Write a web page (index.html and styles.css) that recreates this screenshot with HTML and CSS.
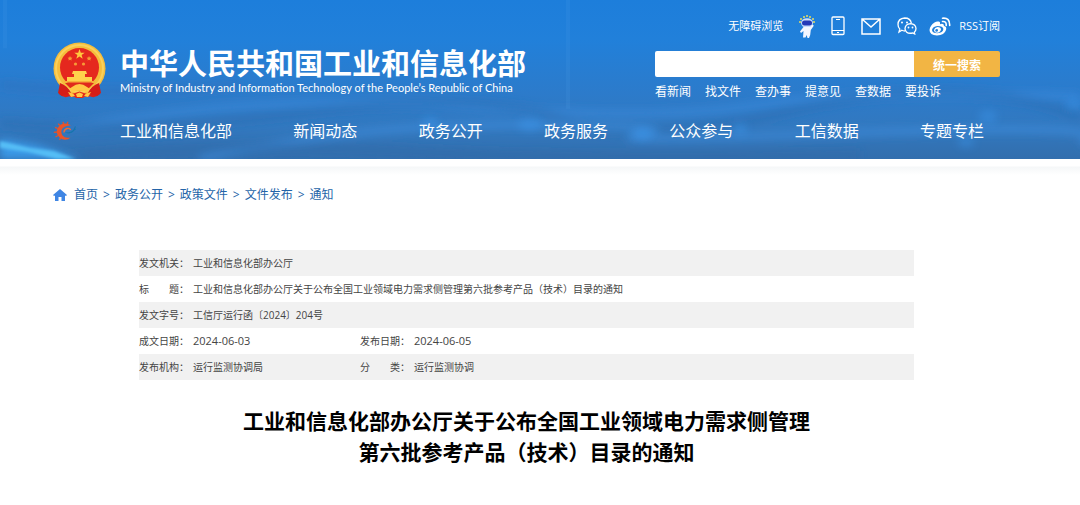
FILE: index.html
```html
<!DOCTYPE html>
<html lang="zh-CN">
<head>
<meta charset="utf-8">
<title>中华人民共和国工业和信息化部</title>
<link rel="stylesheet" href="styles.css">
</head>
<body>
<header class="header">
  <svg class="header-art" viewBox="0 0 1080 158" preserveAspectRatio="none" aria-hidden="true">
    <defs>
      <filter id="soft" x="-20%" y="-50%" width="140%" height="200%"><feGaussianBlur stdDeviation="4"/></filter>
      <filter id="slight" x="-20%" y="-50%" width="140%" height="200%"><feGaussianBlur stdDeviation="1.500"/></filter>
    </defs>
    <g fill="none" filter="url(#soft)">
      <path d="M0 84Q120 96 240 84" stroke="#2f6fb8" stroke-width="9" opacity=".4"/>
      <path d="M60 128Q260 92 460 106T760 104T1080 96" stroke="#3c90e2" stroke-width="6" opacity=".6"/>
      <path d="M0 122Q120 134 300 112T560 118T800 108T1080 116" stroke="#2c68a8" stroke-width="10" opacity=".35"/>
      <path d="M200 158Q360 122 530 124T640 134T860 132T1080 142" stroke="#3f93e4" stroke-width="6" opacity=".6"/>
      <path d="M60 158Q200 140 400 150T860 154" stroke="#2f66a4" stroke-width="9" opacity=".4"/>
    </g>
    <g fill="#3d9cf4" filter="url(#soft)" opacity=".4">
      <ellipse cx="530" cy="124" rx="12" ry="6"/><ellipse cx="642" cy="133" rx="9" ry="6"/><ellipse cx="740" cy="128" rx="7" ry="6"/><ellipse cx="988" cy="116" rx="9" ry="6"/><ellipse cx="966" cy="141" rx="8" ry="5"/><ellipse cx="1074" cy="104" rx="9" ry="5"/><ellipse cx="430" cy="122" rx="8" ry="6"/>
    </g>
    <path d="M0 138L36 144 82 158H0Z" fill="#3a9ae8" filter="url(#soft)"/>
    <path d="M0 140L30 147 54 150 76 158H56L28 151 0 147Z" fill="#55bef6" filter="url(#slight)"/>
    <path d="M5 0V48M568 0V108" stroke="#58a6ee" stroke-width="4" opacity=".12"/>
  </svg>
  <div class="header-body">
    <div class="masthead">
      <div class="brand">
        <svg class="emblem" viewBox="0 0 53 57" aria-hidden="true">
          <path d="M8 39L45 39 47 52Q42 57 36 54L26 56 17 54Q11 57 6 52Z" fill="#dc2018"/>
          <circle cx="26.500" cy="26.500" r="26" fill="#f5bd3c"/>
          <circle cx="26.500" cy="26.500" r="23.500" fill="none" stroke="#fbd05a" stroke-width="2"/>
          <circle cx="26.500" cy="25.500" r="19.500" fill="#e5281e"/>
          <path d="M26.500 7l1.300 3.700h3.900l-3.100 2.300 1.100 3.700-3.200-2.200-3.200 2.200 1.100-3.700-3.100-2.300h3.900Z" fill="#ffc83e"/>
          <g fill="#f79a36"><path d="M17 14l.8 1.500 1.700.2-1.200 1.200.3 1.700-1.600-.8-1.500.8.3-1.700-1.200-1.200 1.700-.2Z"/><path d="M36 14l.8 1.500 1.700.2-1.200 1.200.3 1.700-1.600-.8-1.500.8.3-1.700-1.200-1.200 1.700-.2Z"/><circle cx="22.500" cy="22" r="1.600"/><circle cx="30.500" cy="22" r="1.600"/></g>
          <path d="M20 29h13l1 3h-2v3h7v4H14v-4h7v-3h-2Z" fill="#ffd24c"/>
          <path d="M11 39h31v1.500H11Z" fill="#f5b13a"/>
          <path d="M7 41Q15 44 18 51L9 54 5 51ZM46 41Q38 44 35 51L44 54 48 51Z" fill="#d51d18"/>
          <path d="M12 41h29l-6 6H18Z" fill="#e02a1c"/>
          <path d="M19 45q7.500-6 15 0l3 2-4 3q-6.500-4-13 0l-4-3Z" fill="#ffc945"/>
          <path d="M14 50l5 2 7.500-2.500L34 52l5-2-3 5-4-1-2 2h-7l-2-2-4 1Z" fill="#e02a1c"/>
          <path d="M15 50l5 1.500 2 2.500-4 1ZM38 50l-5 1.500-2 2.500 4 1ZM23 52l3.500-1.500L30 52l-1 3h-5Z" fill="#ffc945"/>
        </svg>
        <div class="brand-text">
          <h1 class="brand-name">中华人民共和国工业和信息化部</h1>
          <p class="brand-english" lang="en">Ministry of Industry and Information Technology of the People’s Republic of China</p>
        </div>
      </div>
      <div class="tools">
        <div class="quick">
          <a class="quick-text" href="#">无障碍浏览</a>
          <a class="robot-link" href="#" aria-label="智能问答">
            <svg width="16" height="23" viewBox="0 0 16 23"><g fill="#e9dc62"><circle cx="2" cy="4" r="1"/><circle cx="5" cy="2" r="1"/><circle cx="8" cy="1" r="1"/><circle cx="11" cy="2" r="1"/><circle cx="14" cy="4" r="1"/><circle cx="1" cy="7" r="1"/><circle cx="15" cy="7" r="1"/></g><ellipse cx="8" cy="8" rx="6" ry="4.800" fill="#c9dcfa"/><rect x="3" y="5.500" width="10" height="5" rx="2.500" fill="#2439b8"/><path d="M4.500 12h6.500l2.500-2.500 1.300 1.200-3 4.300-.6 5-1.200 3H8.500l-.8-3-1.200 2.500H4l.5-6.500-2.500 2-1-1.500Z" fill="#f3f6ff"/></svg>
          </a>
          <a class="phone-link" href="#" aria-label="手机版">
            <svg width="14" height="20" viewBox="0 0 14 20" fill="none" stroke="#fff"><rect x="1" y="1" width="12" height="17.500" rx="1" stroke-width="1.300"/><path d="M5 3.500h4M1 14.500h12M6 16.500h2"/></svg>
          </a>
          <a class="mail-link" href="#" aria-label="邮箱">
            <svg width="20" height="17" viewBox="0 0 20 17" fill="none" stroke="#fff" stroke-width="1.500"><path d="M1 1h18v15H1ZM1 1l9 8 9-8"/></svg>
          </a>
          <a class="wechat-link" href="#" aria-label="微信">
            <svg width="20" height="18" viewBox="0 0 20 18"><g fill="none" stroke="#fff" stroke-width="1.300"><path d="M8 14q-2 0-3.200-.7L2 15l.8-3Q1 10.500 1 7.600 1 1.500 7.700 1 13.500 1 14.400 6.300"/><path d="M19 11.500q0 2.500-1.700 3.700l.4 1.800-2.200-1q-6.500 1.200-7.500-4.200Q8.200 7 13.500 6.600 18.700 7 19 11.500Z"/></g><g fill="#fff"><circle cx="5" cy="5.500" r="1"/><circle cx="10" cy="5.500" r="1"/><circle cx="11.500" cy="10.500" r=".9"/><circle cx="15.500" cy="10.500" r=".9"/></g></svg>
          </a>
          <a class="weibo-link" href="#" aria-label="微博">
            <svg width="22" height="19" viewBox="0 0 22 19"><path fill="#fff" fill-rule="evenodd" d="M9 4.500Q11.500 4 11 7.200 15 6 15 9q3 .7 2 4-1.500 5-9 5.500Q.5 18 .5 13 1 8.500 5.500 5.500 7.500 4.200 9 4.500ZM8.500 9Q3.500 9.500 3 13q.4 3.200 5.400 3.300 5.600-.6 6-4.300Q14 9 8.500 9Z"/><path fill="#fff" fill-rule="evenodd" d="M8.500 10q3.500 0 3.500 2.500-.5 3-4 3.200Q5 15.400 5 13q.5-2.600 3.500-3ZM7.600 12a1.400 1.400 0 1 0 .1 2.800 1.400 1.400 0 0 0-.1-2.800Z"/><path d="M13.500 4.500q4-.5 3.700 4M13.500 1.200q7.500-.8 7.200 7.300" fill="none" stroke="#fff" stroke-width="1.600" stroke-linecap="round"/></svg>
          </a>
          <a class="quick-text" href="#">RSS订阅</a>
        </div>
        <form class="search">
          <input class="search-input" type="text" aria-label="搜索">
          <button class="search-button" type="button">统一搜索</button>
        </form>
        <div class="shortcuts">
          <a href="#">看新闻</a><a href="#">找文件</a><a href="#">查办事</a><a href="#">提意见</a><a href="#">查数据</a><a href="#">要投诉</a>
        </div>
      </div>
    </div>
    <nav class="nav">
      <svg class="nav-logo" width="24" height="20" viewBox="0 0 24 20" aria-hidden="true">
        <path d="M18 4.500Q13 .8 7.500 3.800 3 7.500 4 12.500 6 18.500 12 18.800q3.500 0 5.500-2.300-5.500 1.200-8-2Q7 10.500 9.800 7 13 4 18 4.500Z" fill="#ea5428"/>
        <path d="M14 3l1-2.200M10.500 3L10 .8M7 4.500L5.200 2.700M4.800 7.500L2 6.300M4 11l-3.200.4M5 14.500l-2.500 1.500M7.500 17l-1 2" stroke="#e4522a" stroke-width="1.300" fill="none"/>
        <path d="M11 11.500q0-3 3-4 3-.5 3.500 1.500" fill="none" stroke="#ee6a34" stroke-width="1.400"/>
        <path d="M22 5l1 1-1 1.200 1 1-1.700 1.300q-2 3-6.300 3l-4-1q7.500.5 9.500-3Z" fill="#1675ad"/>
      </svg>
      <div class="nav-links">
        <a href="#">工业和信息化部</a><a href="#">新闻动态</a><a href="#">政务公开</a><a href="#">政务服务</a><a href="#">公众参与</a><a href="#">工信数据</a><a href="#">专题专栏</a>
      </div>
    </nav>
  </div>
</header>
<main class="main">
  <nav class="crumbs" aria-label="当前位置">
    <svg class="home" width="14" height="12" viewBox="0 0 14 12" aria-hidden="true"><path d="M7 0l7 6-1 1-1-.5V12H8.500V8h-3v4H2V6.500L1 7 0 6Z" fill="#3f86e4"/></svg>
    <a href="#">首页</a><span>&gt;</span><a href="#">政务公开</a><span>&gt;</span><a href="#">政策文件</a><span>&gt;</span><a href="#">文件发布</a><span>&gt;</span><a href="#">通知</a>
  </nav>
  <article class="article">
    <table class="meta">
      <colgroup><col class="col-label"><col class="col-value"><col class="col-label"><col></colgroup>
      <tr><th>发文机关：</th><td colspan="3">工业和信息化部办公厅</td></tr>
      <tr><th>标　　题：</th><td colspan="3">工业和信息化部办公厅关于公布全国工业领域电力需求侧管理第六批参考产品（技术）目录的通知</td></tr>
      <tr><th>发文字号：</th><td colspan="3">工信厅运行函〔2024〕204号</td></tr>
      <tr><th>成文日期：</th><td class="date">2024-06-03</td><th>发布日期：</th><td class="date">2024-06-05</td></tr>
      <tr><th>发布机构：</th><td>运行监测协调局</td><th>分　　类：</th><td>运行监测协调</td></tr>
    </table>
    <h2 class="title">工业和信息化部办公厅关于公布全国工业领域电力需求侧管理<br>第六批参考产品（技术）目录的通知</h2>
  </article>
</main>
</body>
</html>
```
FILE: styles.css
```css
* { box-sizing: border-box; }
body {
  margin: 0;
  background: #fff;
  color: #444;
  font-family: "Open Sans", "Noto Sans CJK SC", sans-serif;
  font-size: 12px;
}
a { color: inherit; text-decoration: none; }
h1, h2, p { margin: 0; }

.header {
  position: relative;
  color: #fff;
  background: linear-gradient(#1d7edb 0%, #2180da 25%, #2c7bcb 58%, #3278bf 80%, #326ead 100%);
}
.header-art { position: absolute; inset: 0; width: 100%; height: 100%; }
.header-body { position: relative; padding: 14px 80px 16px 53px; }
.masthead { display: flex; justify-content: space-between; }
.brand { display: flex; gap: 14px; padding-top: 28px; }
.emblem { width: 53px; height: 57px; }
.brand-text { padding-top: 3px; }
.brand-name { font-family: "Noto Sans CJK SC", sans-serif; font-size: 29px; line-height: 34px; font-weight: 700; }
.brand-english { font-family: Lato, sans-serif; font-size: 11px; line-height: 18px; white-space: nowrap; }

.tools { width: 345px; }
.quick { display: flex; align-items: center; justify-content: flex-end; height: 24px; }
.quick a { display: flex; }
.quick-text { font-size: 11px; line-height: 16px; white-space: nowrap; }
.robot-link, .phone-link, .mail-link, .wechat-link { margin-left: 16px; }
.weibo-link { margin-left: 12px; margin-right: 8px; }
.search { display: flex; height: 26px; margin-top: 13px; }
.search-input { flex: 1; min-width: 0; border: 0; border-radius: 2px 0 0 2px; background: #fff; padding: 0 8px; }
.search-button {
  width: 86px; padding: 0; border: 0; border-radius: 0 2px 2px 0;
  background: #f2b544; color: #fff; font: 700 12px "Noto Sans CJK SC", sans-serif;
}
.shortcuts { display: flex; gap: 14px; padding-top: 6px; line-height: 18px; }

.nav { display: flex; align-items: center; gap: 43px; padding-top: 18px; }
.nav-logo { flex: none; }
.nav-links { flex: 1; display: flex; justify-content: space-between; padding-right: 16px; font-size: 16px; line-height: 24px; }

.main { padding: 26px 80px 40px 53px; background: linear-gradient(#fff 7px, #f5f7f8 8px, #fff 16px); }
.crumbs { display: flex; align-items: center; gap: 5px; color: #2464a8; line-height: 20px; }
.home { margin-right: 2px; }
.article { padding: 45px 86px 0; }
.meta { width: 100%; table-layout: fixed; border-collapse: collapse; font-size: 10px; line-height: 26px; }
.meta th, .meta td { padding: 0; font-weight: 400; text-align: left; white-space: nowrap; }
.meta .date { font-size: 11px; }
.meta tr:nth-child(odd) { background: #f1f1f1; }
.col-label { width: 54px; }
.col-value { width: 167px; }
.title { margin-top: 26px; color: #000; font-size: 21px; line-height: 31px; font-weight: 700; text-align: center; }
```
